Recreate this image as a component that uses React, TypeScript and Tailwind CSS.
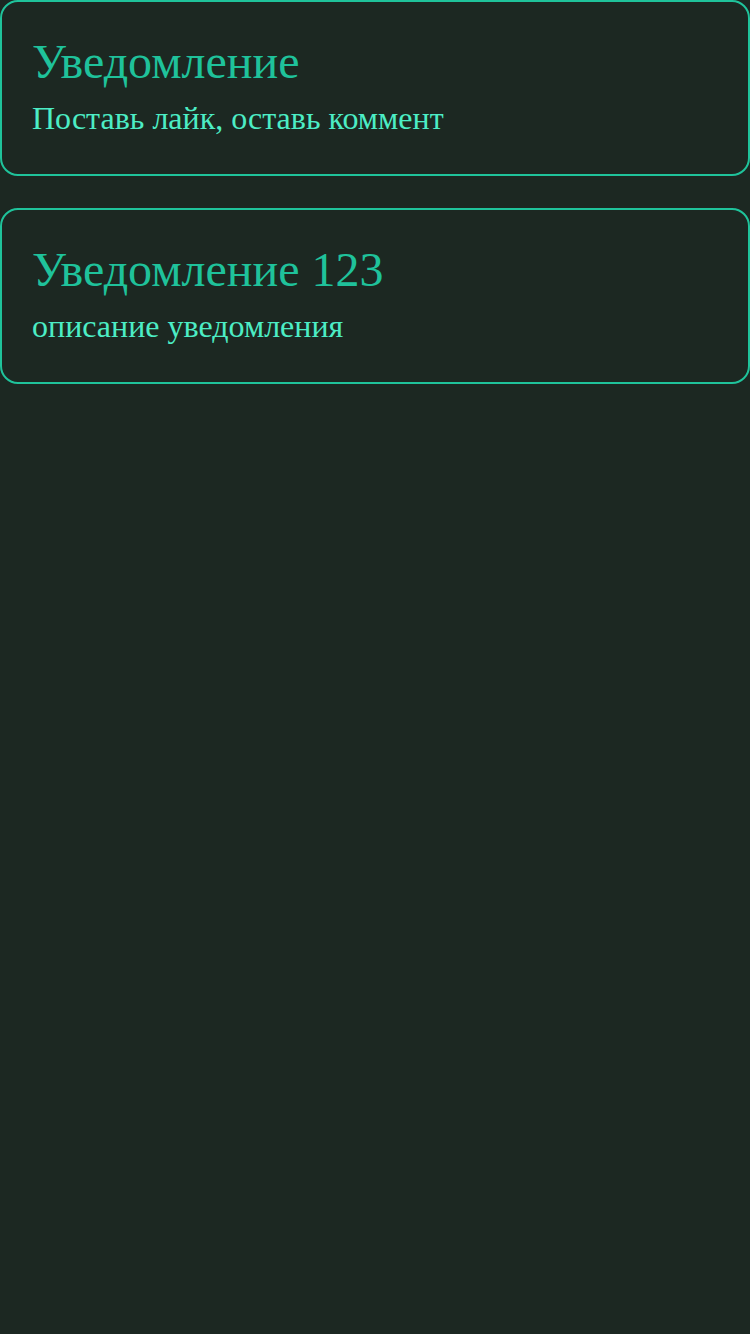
export default function App() {
  const items = [
    { title: "Уведомление", desc: "Поставь лайк, оставь коммент" },
    { title: "Уведомление 123", desc: "описание уведомления" },
  ];

  return (
    <div className="min-h-[1334px] bg-[#1c2822] font-['Liberation_Serif',serif] flex flex-col gap-8">
      {items.map((item) => (
        <div
          key={item.title}
          className="h-[176px] border-2 border-[#1fc39b] rounded-[18px] px-[30px] pt-[33px]"
        >
          <h2 className="text-[48px] leading-[53px] text-[#1fc29b]">{item.title}</h2>
          <p className="mt-[12px] text-[32px] leading-[36px] text-[#4cedc5]">{item.desc}</p>
        </div>
      ))}
    </div>
  );
}
